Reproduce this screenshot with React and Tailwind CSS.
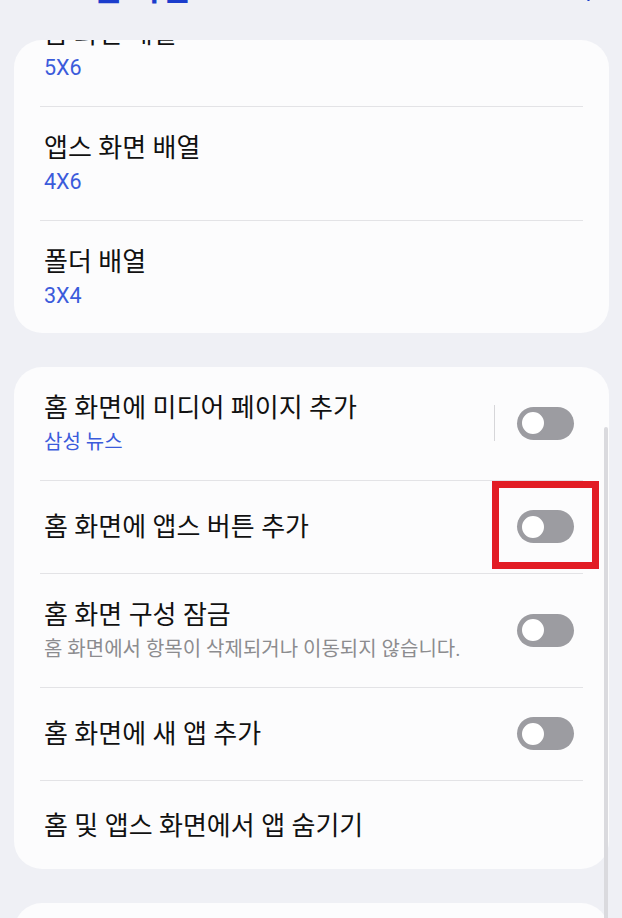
import { ChevronLeft, Search } from "lucide-react";

const font = { fontFamily: 'Roboto, "Noto Sans CJK KR", sans-serif' };

const Toggle = () => (
  <div className="relative w-[57px] h-[33px] rounded-full bg-[#9c9ca1] shrink-0">
    <div className="absolute left-[2px] top-[2.5px] w-[28px] h-[28px] rounded-full bg-white border-[3px] border-[#9c9ca1]" />
  </div>
);

const Row = ({ title, value, sub, toggle, divider = true, split, highlight, latin, className = "" }) => {
  const twoLine = value || sub;
  return (
    <div className={`flex items-center pl-[4px] pr-[9px] ${twoLine ? "py-[25px]" : "py-[29.5px]"} ${divider ? "border-b border-[#e3e3e6]" : ""} ${className}`}>
      <div className="flex-1 min-w-0">
        <div className="text-[26px] leading-[32px] text-[#111]">{title}</div>
        {value && (
          <div className={`mt-[5px] ${latin ? "text-[21.5px]" : "text-[20px]"} leading-[26px] text-[#3b5bdb]`}>{value}</div>
        )}
        {sub && (
          <div className="mt-[5px] text-[20px] leading-[26px] text-[#8c8c8f]">{sub}</div>
        )}
      </div>
      {split && <div className="w-[1.5px] h-[36px] bg-[#d6d6d9] mr-[22px]" />}
      {toggle && (
        <div className="relative">
          <Toggle />
          {highlight && (
            <div className="absolute left-[-25px] top-[-29px] w-[107px] h-[88px] border-[7px] border-[#e21c24]" />
          )}
        </div>
      )}
    </div>
  );
};

export default function App() {
  return (
    <div className="relative h-[918px] w-[622px] overflow-hidden bg-[#eff0f5]" style={font}>
      {/* header, mostly scrolled out */}
      <div className="h-[40px] overflow-hidden">
        <div className="flex items-center h-[36px] -mt-[29px] pl-[40px] pr-[30px] text-[#1b3dcc]">
          <ChevronLeft size={30} strokeWidth={2.6} />
          <span className="ml-[24px] text-[32px] leading-[36px] font-bold">홈 화면</span>
          <Search size={28} strokeWidth={2.6} className="ml-auto" />
        </div>
      </div>

      <div className="ml-[14px] w-[595px] rounded-[28px] bg-[#fcfcfd] px-[26px] overflow-hidden">
        <Row title="홈 화면 배열" value="5X6" latin className="-mt-[47.5px]" />
        <Row title="앱스 화면 배열" value="4X6" latin />
        <Row title="폴더 배열" value="3X4" latin divider={false} className="!pb-[24px]" />
      </div>

      <div className="mt-[34px] ml-[14px] w-[595px] rounded-[28px] bg-[#fcfcfd] px-[26px]">
        <Row title="홈 화면에 미디어 페이지 추가" value="삼성 뉴스" toggle split />
        <Row title="홈 화면에 앱스 버튼 추가" toggle highlight />
        <Row title="홈 화면 구성 잠금" sub="홈 화면에서 항목이 삭제되거나 이동되지 않습니다." toggle />
        <Row title="홈 화면에 새 앱 추가" toggle />
        <Row title="홈 및 앱스 화면에서 앱 숨기기" divider={false} className="!pb-[27px]" />
      </div>

      <div className="mt-[34px] ml-[14px] w-[595px] h-[120px] rounded-[28px] bg-[#fcfcfd]" />

      {/* scrollbar */}
      <div className="absolute left-[604px] top-[427px] w-[4px] h-[500px] rounded-full bg-[#dadade]" />
    </div>
  );
}
